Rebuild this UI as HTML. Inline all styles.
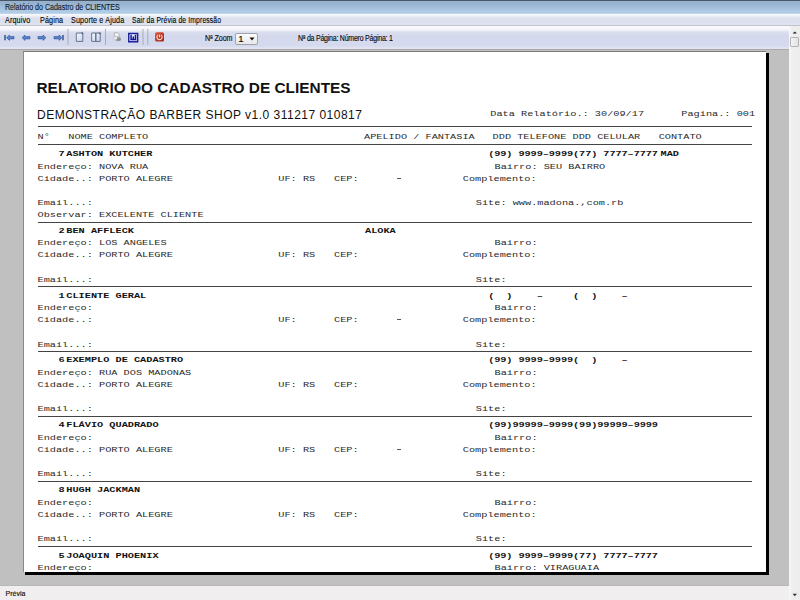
<!DOCTYPE html>
<html><head><meta charset="utf-8">
<style>
*{margin:0;padding:0;box-sizing:border-box}
html,body{width:800px;height:600px;overflow:hidden;background:#c0c0c0;font-family:"Liberation Sans",sans-serif}
#title{position:absolute;left:0;top:0;width:800px;height:14px;background:linear-gradient(#45556b 0,#45556b 1px,#a3b5ca 1px,#93afcb 2px,#a3bfdb 8px,#b3cfe8 13px,#c8dcee 14px)}
#title span{position:absolute;left:5.3px;top:1.6px;-webkit-text-stroke:0.1px #0e1828;font-size:8.3px;line-height:10px;color:#0e1828;letter-spacing:-0.05px;transform:scaleX(0.86);transform-origin:0 0;white-space:pre}
#menu{position:absolute;left:0;top:14px;width:800px;height:12px;background:linear-gradient(#fcfdff 0,#f4f5fa 1px,#dfe2ef 4px,#dadeed 6px,#e0e3f0 11px,#c2c4cd 11px,#c2c4cd 12px)}
#menu span{position:absolute;top:1px;letter-spacing:0.15px;-webkit-text-stroke:0.1px #000;font-size:8.3px;line-height:10px;color:#000;transform:scaleX(0.87);transform-origin:0 0;white-space:pre}
#tb{position:absolute;left:0;top:26px;width:789px;height:23px;background:linear-gradient(#fafafd 0,#f2f3f9 4px,#dadeef 6px,#d3d8ec 10px,#d5daee 20px,#e2e4f0 22px,#e2e4f0 23px)}
#sb{position:absolute;left:789px;top:26px;width:11px;height:574px;background:linear-gradient(90deg,#f8f8f8,#eeeeee 3px,#ededed)}
#status{position:absolute;left:0;top:585px;width:789px;height:15px;background:#f0eeee;border-top:1px solid #b8b8b8}
#status span{position:absolute;-webkit-text-stroke:0.15px #111;left:5.5px;top:3px;font-size:7px;line-height:9px;color:#111}
#gray{position:absolute;left:0;top:49px;width:789px;height:536px;background:#c0c0c0;border-top:1px solid #a9a9a9}
#page{position:absolute;left:23px;top:51px;width:743px;height:521px;background:#fff;border-left:1px solid #8a8a8a;border-top:1px solid #7a7a7a}
#shr{position:absolute;left:766px;top:53px;width:3px;height:522px;background:#000}
#shb{position:absolute;left:25px;top:572px;width:744px;height:3px;background:#000}
.m,.mb{position:absolute;font:10.25px/12px "Liberation Mono",monospace;white-space:pre;color:#2a2a2a;transform:scaleY(0.75);transform-origin:0 8.7px}
.mb{font-weight:bold;color:#111}
.dsh{position:absolute;width:4.6px;height:1px;background:#555}
.hl{position:absolute;left:38px;width:714px;height:1px;background:#444}
.t1{position:absolute;left:36.5px;top:79px;font:bold 15.4px/18px "Liberation Sans",sans-serif;color:#111;white-space:pre}
.t2{position:absolute;left:37px;top:108px;letter-spacing:0.49px;font:12px/15px "Liberation Sans",sans-serif;color:#111;white-space:pre}
.sep{position:absolute;top:29px;width:1px;height:16px;background:#a4aab8}
.tbt{position:absolute;-webkit-text-stroke:0.15px #111;font-size:7.5px;line-height:9px;color:#0a0a0a;white-space:pre}
</style></head><body>
<div id="title"><span>Relatório do Cadastro de CLIENTES</span></div>
<div id="menu"><span style="left:4.5px">Arquivo</span><span style="left:40px">Página</span><span style="left:70.8px">Suporte e Ajuda</span><span style="left:132px;transform:scaleX(0.82)">Sair da Prévia de Impressão</span></div>
<div id="tb">
<svg style="position:absolute;left:0;top:0" width="180" height="23">
 <g fill="#5584d2" stroke="#2f5299" stroke-width="0.6" transform="translate(0,0.5)">
  <rect x="4.3" y="8.5" width="1.4" height="5.3" fill="#2d4a8a" stroke="none"/>
  <path d="M6.5 11.2 L9.5 8.5 L9.5 10 L14 10 L14 12.4 L9.5 12.4 L9.5 13.9 Z"/>
  <path d="M22 11.2 L25 8.5 L25 10 L30 10 L30 12.4 L25 12.4 L25 13.9 Z"/>
  <path d="M46 11.2 L43 8.5 L43 10 L38 10 L38 12.4 L43 12.4 L43 13.9 Z"/>
  <path d="M62 11.2 L59 8.5 L59 10 L54 10 L54 12.4 L59 12.4 L59 13.9 Z"/>
  <rect x="62.3" y="8.5" width="1.4" height="5.3" fill="#2d4a8a" stroke="none"/>
 </g>
 <rect x="67.5" y="3" width="1" height="16" fill="#a8aebb"/>
 <defs><linearGradient id="pg" x1="0" y1="0" x2="1" y2="1"><stop offset="0" stop-color="#f4fbff"/><stop offset="1" stop-color="#c4d2ee"/></linearGradient></defs>
 <path d="M76.3 7 H81.4 L82.8 8.4 V15.4 H76.3 Z" fill="url(#pg)" stroke="#5c6880" stroke-width="0.9"/>
 <path d="M81 6.6 L83.2 8.8 V6.6 Z" fill="#34405a"/>
 <path d="M91.7 7 H95.8 V15.4 H91.7 Z M95.8 7 H98.8 L100.2 8.4 V15.4 H95.8 Z" fill="url(#pg)" stroke="#5c6880" stroke-width="0.9"/>
 <path d="M98.4 6.6 L100.6 8.8 V6.6 Z" fill="#34405a"/>
 <rect x="105" y="3" width="1" height="16" fill="#a8aebb"/>
 <g>
  <path d="M114.3 6.8 H118.3 L119.3 7.8 V10.8 H114.3 Z" fill="#eef0f4" stroke="#a8aab0" stroke-width="0.8"/>
  <ellipse cx="117.2" cy="12.6" rx="3.9" ry="2.6" fill="#c6c8cc"/>
  <ellipse cx="118.4" cy="13.2" rx="2.6" ry="1.9" fill="#8e9094"/>
  <ellipse cx="115.6" cy="12.2" rx="1.6" ry="1.2" fill="#eceef2"/>
 </g>
 <rect x="128.8" y="7.5" width="8.8" height="8.3" fill="#d0d4fa" stroke="#1c1e9a" stroke-width="1.5"/>
 <rect x="129.8" y="8.5" width="6.8" height="6.2" fill="#dfe2fb"/>
 <path d="M131.1 8.8 V13.5 H135.5 V8.8 M133.3 10.4 V13.5" fill="none" stroke="#14168c" stroke-width="1.45"/>
 <rect x="142.5" y="3" width="1" height="16" fill="#a8aebb"/>
 <rect x="147.3" y="3" width="1" height="16" fill="#a8aebb"/>
 <defs><linearGradient id="rg" x1="0" y1="0" x2="1" y2="1"><stop offset="0" stop-color="#e05a42"/><stop offset="1" stop-color="#9a1e12"/></linearGradient></defs>
 <rect x="155" y="6.3" width="9" height="9.2" rx="1.6" fill="url(#rg)"/>
 <path d="M158.1 8.9 A2.6 2.6 0 1 0 161 8.9" fill="none" stroke="#fbd8d0" stroke-width="1.1"/>
 <rect x="159" y="8.6" width="1.1" height="2.8" fill="#fbd8d0"/>
</svg>
<span class="tbt" style="left:204.8px;top:8px;font-size:8.3px;letter-spacing:-0.1px;transform:scaleX(0.86);transform-origin:0 0">Nª Zoom</span>
<div style="position:absolute;left:235px;top:6.5px;width:22.5px;height:12px;border:1px solid #9ea3ab;border-radius:2px;background:linear-gradient(#fbfbfb,#e9e9e9)"></div>
<span class="tbt" style="left:238.3px;top:7.5px;font-size:9.5px">1</span>
<svg style="position:absolute;left:249px;top:11px" width="6" height="4"><path d="M0.5 0.5 H5.5 L3 3.5 Z" fill="#111"/></svg>
<span class="tbt" style="left:298px;top:8.2px;font-size:8.3px;letter-spacing:-0.25px;transform:scaleX(0.84);transform-origin:0 0">Nª da Página: Número Página: 1</span>
</div>
<div id="gray"></div>
<div id="page"></div>
<div id="shr"></div>
<div id="shb"></div>
<div class="t1">RELATORIO DO CADASTRO DE CLIENTES</div>
<div class="t2">DEMONSTRAÇÃO BARBER SHOP v1.0 311217 010817</div>
<div class="m" style="left:490.30px;top:107.10px;">Data Relatório.: 30/09/17</div>
<div class="m" style="left:681.30px;top:107.10px;">Pagina.: 001</div>
<div class="hl" style="top:126.00px"></div>
<div class="m" style="left:37.50px;top:129.80px;">N°</div>
<div class="m" style="left:68.25px;top:129.80px;">NOME COMPLETO</div>
<div class="m" style="left:364.00px;top:129.80px;">APELIDO / FANTASIA</div>
<div class="m" style="left:492.60px;top:129.80px;">DDD TELEFONE DDD CELULAR   CONTATO</div>
<div class="hl" style="top:144.00px"></div>
<div class="mb" style="left:58.50px;top:146.90px;">7</div>
<div class="mb" style="left:66.30px;top:146.90px;">ASHTON KUTCHER</div>
<div class="mb" style="left:488.20px;top:146.90px;letter-spacing:-0.09px">(99) 9999–9999(77) 7777–7777</div>
<div class="mb" style="left:660.50px;top:146.90px;">MAD</div>
<div class="m" style="left:37.50px;top:160.10px;">Endereço: NOVA RUA</div>
<div class="m" style="left:494.50px;top:160.10px;">Bairro: SEU BAIRRO</div>
<div class="m" style="left:37.50px;top:172.10px;">Cidade..: PORTO ALEGRE</div>
<div class="m" style="left:278.30px;top:172.10px;">UF: RS</div>
<div class="m" style="left:334.00px;top:172.10px;">CEP:</div>
<div class="dsh" style="left:396.5px;top:177.80px"></div>
<div class="m" style="left:462.80px;top:172.10px;">Complemento:</div>
<div class="m" style="left:37.50px;top:196.10px;">Email...:</div>
<div class="m" style="left:475.80px;top:196.10px;">Site: www.madona.,com.rb</div>
<div class="m" style="left:37.50px;top:208.10px;">Observar: EXCELENTE CLIENTE</div>
<div class="hl" style="top:221.50px"></div>
<div class="mb" style="left:58.50px;top:223.90px;">2</div>
<div class="mb" style="left:66.30px;top:223.90px;">BEN AFFLECK</div>
<div class="mb" style="left:365.00px;top:223.90px;">ALOKA</div>
<div class="m" style="left:37.50px;top:236.40px;">Endereço: LOS ANGELES</div>
<div class="m" style="left:494.50px;top:236.40px;">Bairro: </div>
<div class="m" style="left:37.50px;top:248.40px;">Cidade..: PORTO ALEGRE</div>
<div class="m" style="left:278.30px;top:248.40px;">UF: RS</div>
<div class="m" style="left:334.00px;top:248.40px;">CEP:</div>
<div class="m" style="left:462.80px;top:248.40px;">Complemento:</div>
<div class="m" style="left:37.50px;top:272.60px;">Email...:</div>
<div class="m" style="left:475.80px;top:272.60px;">Site: </div>
<div class="hl" style="top:286.00px"></div>
<div class="mb" style="left:58.50px;top:288.60px;">1</div>
<div class="mb" style="left:66.30px;top:288.60px;">CLIENTE GERAL</div>
<div class="mb" style="left:488.20px;top:288.60px;letter-spacing:-0.09px">(  )    –     (  )    –</div>
<div class="m" style="left:37.50px;top:301.40px;">Endereço: </div>
<div class="m" style="left:494.50px;top:301.40px;">Bairro: </div>
<div class="m" style="left:37.50px;top:313.30px;">Cidade..: </div>
<div class="m" style="left:278.30px;top:313.30px;">UF: </div>
<div class="m" style="left:334.00px;top:313.30px;">CEP:</div>
<div class="dsh" style="left:396.5px;top:319.00px"></div>
<div class="m" style="left:462.80px;top:313.30px;">Complemento:</div>
<div class="m" style="left:37.50px;top:337.70px;">Email...:</div>
<div class="m" style="left:475.80px;top:337.70px;">Site: </div>
<div class="hl" style="top:351.10px"></div>
<div class="mb" style="left:58.50px;top:353.30px;">6</div>
<div class="mb" style="left:66.30px;top:353.30px;">EXEMPLO DE CADASTRO</div>
<div class="mb" style="left:488.20px;top:353.30px;letter-spacing:-0.09px">(99) 9999–9999(  )    –</div>
<div class="m" style="left:37.50px;top:366.10px;">Endereço: RUA DOS MADONAS</div>
<div class="m" style="left:494.50px;top:366.10px;">Bairro: </div>
<div class="m" style="left:37.50px;top:378.10px;">Cidade..: PORTO ALEGRE</div>
<div class="m" style="left:278.30px;top:378.10px;">UF: RS</div>
<div class="m" style="left:334.00px;top:378.10px;">CEP:</div>
<div class="m" style="left:462.80px;top:378.10px;">Complemento:</div>
<div class="m" style="left:37.50px;top:401.90px;">Email...:</div>
<div class="m" style="left:475.80px;top:401.90px;">Site: </div>
<div class="hl" style="top:415.80px"></div>
<div class="mb" style="left:58.50px;top:418.30px;">4</div>
<div class="mb" style="left:66.30px;top:418.30px;">FLÁVIO QUADRADO</div>
<div class="mb" style="left:488.20px;top:418.30px;letter-spacing:-0.09px">(99)99999–9999(99)99999–9999</div>
<div class="m" style="left:37.50px;top:431.10px;">Endereço: </div>
<div class="m" style="left:494.50px;top:431.10px;">Bairro: </div>
<div class="m" style="left:37.50px;top:442.90px;">Cidade..: PORTO ALEGRE</div>
<div class="m" style="left:278.30px;top:442.90px;">UF: RS</div>
<div class="m" style="left:334.00px;top:442.90px;">CEP:</div>
<div class="dsh" style="left:396.5px;top:448.60px"></div>
<div class="m" style="left:462.80px;top:442.90px;">Complemento:</div>
<div class="m" style="left:37.50px;top:466.80px;">Email...:</div>
<div class="m" style="left:475.80px;top:466.80px;">Site: </div>
<div class="hl" style="top:480.50px"></div>
<div class="mb" style="left:58.50px;top:483.10px;">8</div>
<div class="mb" style="left:66.30px;top:483.10px;">HUGH JACKMAN</div>
<div class="m" style="left:37.50px;top:495.70px;">Endereço: </div>
<div class="m" style="left:494.50px;top:495.70px;">Bairro: </div>
<div class="m" style="left:37.50px;top:507.70px;">Cidade..: PORTO ALEGRE</div>
<div class="m" style="left:278.30px;top:507.70px;">UF: RS</div>
<div class="m" style="left:334.00px;top:507.70px;">CEP:</div>
<div class="m" style="left:462.80px;top:507.70px;">Complemento:</div>
<div class="m" style="left:37.50px;top:532.10px;">Email...:</div>
<div class="m" style="left:475.80px;top:532.10px;">Site: </div>
<div class="hl" style="top:545.70px"></div>
<div class="mb" style="left:58.50px;top:548.60px;">5</div>
<div class="mb" style="left:66.30px;top:548.60px;">JOAQUIN PHOENIX</div>
<div class="mb" style="left:488.20px;top:548.60px;letter-spacing:-0.09px">(99) 9999–9999(77) 7777–7777</div>
<div class="m" style="left:37.50px;top:560.60px;">Endereço: </div>
<div class="m" style="left:494.50px;top:560.60px;">Bairro: VIRAGUAIA</div>

<div id="sb">
<svg style="position:absolute;left:3.2px;top:4.5px" width="6" height="4"><path d="M0.6 2.6 L2.8 0.4 L5 2.6 Z" fill="#222"/></svg>
<div style="position:absolute;left:1.2px;top:11px;width:8.7px;height:9.5px;border:1px solid #b4b4b4;border-radius:1px;background:linear-gradient(90deg,#f4f4f4,#e2e2e2)"></div>
<svg style="position:absolute;left:3.2px;top:566.5px" width="6" height="4"><path d="M0.6 0.8 L2.8 3.2 L5 0.8 Z" fill="#333"/></svg>
</div>
<div id="status"><span>Prévia</span></div>
</body></html>
